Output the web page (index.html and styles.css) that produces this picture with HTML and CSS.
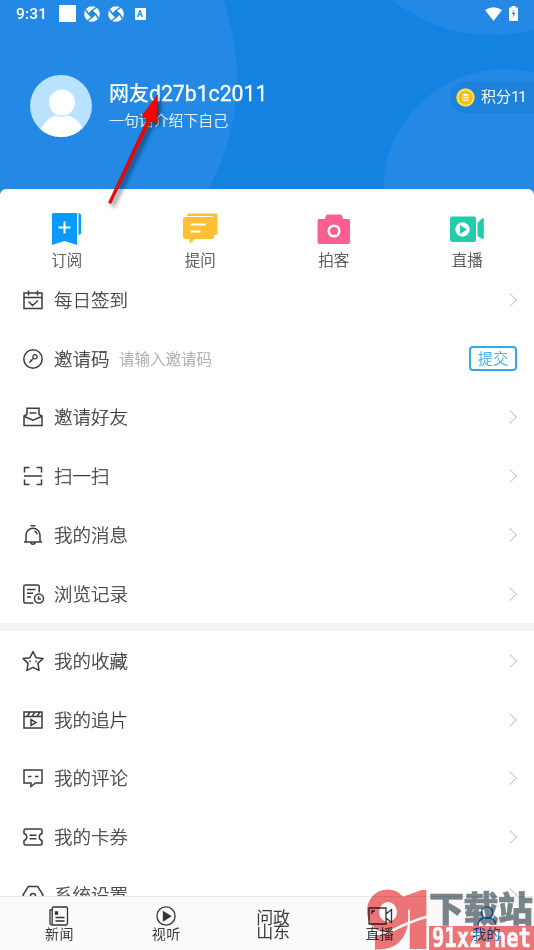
FILE: index.html
```html
<!DOCTYPE html>
<html lang="zh-CN">
<head>
<meta charset="utf-8">
<title>我的</title>
<link rel="stylesheet" href="styles.css">
</head>
<body>
<div class="app">
  <header class="hero">
    <svg class="hero-bg" viewBox="0 0 534 200" aria-hidden="true"><g fill="#2389e4"><circle cx="7" cy="78" r="230"/><circle cx="492" cy="-125" r="160"/><circle cx="505" cy="191" r="122"/></g></svg>
    <div class="status">
      <span class="time">9:31</span>
      <i class="square"></i>
      <svg class="swirl" viewBox="0 0 16 16"><circle cx="8" cy="8" r="7.8" fill="#fff"/><path d="M8 3.600 12.400 8 8 12.400 3.600 8Z" fill="#2389e4"/><path d="M4.500 8 1.500 3.500M8 4.500l4.500-3M11.500 8l3 4.500M8 11.500l-4.500 3" stroke="#2389e4" stroke-width="1.500"/></svg>
      <svg class="swirl" viewBox="0 0 16 16"><circle cx="8" cy="8" r="7.8" fill="#fff"/><path d="M8 3.600 12.400 8 8 12.400 3.600 8Z" fill="#2389e4"/><path d="M4.500 8 1.500 3.500M8 4.500l4.500-3M11.500 8l3 4.500M8 11.500l-4.500 3" stroke="#2389e4" stroke-width="1.500"/></svg>
      <b class="badge-a">A</b>
      <svg class="wifi" viewBox="0 0 17 14"><path d="M0 3Q8.500-2.500 17 3L8.500 14Z" fill="#fff"/></svg>
      <svg class="battery" viewBox="0 0 9 15"><path d="M2.500 0h4v1.500H9V15H0V1.500h2.500Z" fill="#fff"/><path d="M5.500 3.500 2.500 8h2L3.500 12l3-5h-2Z" fill="#2389e4"/></svg>
    </div>
    <div class="profile">
      <svg class="avatar" viewBox="0 0 62 62"><defs><clipPath id="av"><circle cx="31" cy="31" r="31"/></clipPath></defs><g clip-path="url(#av)"><path d="M0 0h62v62H0z" fill="#b9e2ff"/><circle cx="32" cy="27.500" r="13" fill="#fff"/><path d="M9 56C16 45 21 41 27 40.500Q32 43 37 40.500C45 42 50 47 54 56L48 64H14Z" fill="#fff"/></g></svg>
      <div class="who">
        <div class="name">网友<span>d27b1c2011</span></div>
        <div class="bio">一句话介绍下自己</div>
      </div>
      <div class="points">
        <svg viewBox="0 0 19 19"><circle cx="9.500" cy="9.500" r="9.200" fill="#fbe243"/><circle cx="9.500" cy="9.500" r="7" fill="#fdb91f"/><g fill="#fff4cf"><ellipse cx="9.500" cy="7" rx="3.200" ry="1.300"/><path d="M6.300 8.200q3.200 1.800 6.400 0v1.600q-3.200 1.800-6.400 0ZM6.300 10.800q3.200 1.800 6.400 0v1.600q-3.200 1.800-6.400 0Z"/></g></svg>
        <span>积分<em>11</em></span>
      </div>
    </div>
  </header>

  <main class="sheet">
    <nav class="quick">
      <a><svg viewBox="0 0 36 36"><path d="M3 3.500q0-1.500 1.500-1.500H28v32l-12.500-4L3 34Z" fill="#089bff"/><path d="M29.500 2q2.500.5 2.500 2v18q0 2-2.500 2Z" fill="#089bff"/><path d="M9.500 16.500h12M15.500 10.500v12" stroke="#fff" stroke-width="2"/></svg>订阅</a>
      <a><svg viewBox="0 0 36 36"><path d="M5 5q0-2.500 2-2.500h27q1.500 0 1.500 2v17.500q0 2-2 2h-2V7q0-2-2-2Z" fill="#ffc038"/><path d="M1 8Q1 6 3 6h27q2 0 2 2v18q0 2-2 2H13L7.500 33v-5H3q-2 0-2-2Z" fill="#ffc038"/><path d="M8.500 13.500h15M8.500 20.500h10" stroke="#fff" stroke-width="2"/></svg>提问</a>
      <a><svg viewBox="0 0 36 36"><path d="M9 8q.5-4.500 3-4.500h12q2.500 0 3 4.500Z" fill="#ff5f8f"/><rect x="1.500" y="8" width="32.500" height="25" rx="2" fill="#ff5f8f"/><circle cx="18" cy="20" r="5.300" fill="none" stroke="#fff" stroke-width="2.500"/></svg>拍客</a>
      <a><svg viewBox="0 0 36 36"><rect x="1" y="5.500" width="26" height="25.500" rx="2" fill="#22ccab"/><path d="M28.500 12 33 7.500q1.800-1 1.800.8V27q0 1.800-1.800.8L28.500 25Z" fill="#22ccab"/><circle cx="13.500" cy="18.500" r="7.200" fill="#fff"/><path d="m11 14 7 4.500-7 4.500Z" fill="#22ccab"/></svg>直播</a>
    </nav>

    <ul class="menu">
      <li><svg viewBox="0 0 20 20"><path d="M1 3h18v15.500H1ZM1 7.500h18M5.500.5v5M14.500.5v5M5.500 11.500l4 4 5.500-5"/></svg><span>每日签到</span><i class="chev"></i></li>
      <li><svg viewBox="0 0 20 20"><circle cx="10" cy="10" r="9.200"/><g stroke-width="1.200"><circle cx="12" cy="7.700" r="2.100"/><path d="m10.500 9.200-4.500 4.700M7.300 10.700l2 1.600"/></g></svg><span>邀请码</span><small>请输入邀请码</small><button>提交</button></li>
      <li><svg viewBox="0 0 20 20"><path d="M4 8V1.200h12V8M4 7.500 1 9v9.500h18V9l-3-1.500M1.500 9.500 10 13.200l8.500-3.700M6.500 6h7"/></svg><span>邀请好友</span><i class="chev"></i></li>
      <li><svg viewBox="0 0 20 20"><path d="M1.500 6.500V1.500h5M13.500 1.500h5v5M1.500 13.500v5h5M13.500 18.500h5v-5M1 10h18"/></svg><span>扫一扫</span><i class="chev"></i></li>
      <li><svg viewBox="0 0 20 20"><path d="M7.500.8h5M1 17h18M3 17v-7a7 6.800 0 0 1 14 0v7M7.800 17q0 2.200 2.200 2.200t2.200-2.200M11.500 6q2.200.8 2.700 3.200"/></svg><span>我的消息</span><i class="chev"></i></li>
      <li><svg viewBox="0 0 20 20"><path d="M10.500 19H2.500Q.8 19 .8 17.500V2.500Q.8 1 2.500 1h12Q16.200 1 16.200 2.500V8.500M4 5.500h8.500M4 9.200h6M4 13h4"/><circle cx="16" cy="14.500" r="4.500"/><path d="M15.500 12v3h2.500"/></svg><span>浏览记录</span><i class="chev"></i></li>
    </ul>
    <ul class="menu second">
      <li><svg viewBox="0 0 20 20"><path d="m10 .5 3 6.200 6.900.9-5 4.800 1.200 7L10 16.300l-6.100 3.100 1.200-7-5-4.800L7 6.700ZM7 9.500v1.800M13 9.500v1.800" stroke-linejoin="round"/></svg><span>我的收藏</span><i class="chev"></i></li>
      <li><svg viewBox="0 0 20 20"><path d="M1 2h18v16H1ZM1 6.500h18M4 6.500 7 2M9 6.500 12 2M14 6.500 17 2M8 9.500v6l5-3Z"/></svg><span>我的追片</span><i class="chev"></i></li>
      <li><svg viewBox="0 0 20 20"><path d="M1 2h18v13h-6.500L8 18.500V15H1ZM5 8.500h3.500M12 8.500h3.500"/></svg><span>我的评论</span><i class="chev"></i></li>
      <li><svg viewBox="0 0 20 20"><path d="M2.500 2h15q1.500 0 1.500 1.500v3a3.600 3.600 0 0 0 0 7v3q0 1.500-1.500 1.500h-15Q1 18 1 16.500v-3a3.600 3.600 0 0 0 0-7v-3Q1 2 2.500 2ZM6.500 8.200h7M6.500 11.800h7"/></svg><span>我的卡券</span><i class="chev"></i></li>
      <li class="last"><svg viewBox="0 0 20 20"><path d="M5.300 1.500h9.400L20 10l-5.300 8.500H5.300L0 10Z"/><circle cx="10" cy="11" r="2.600"/></svg><span>系统设置</span><i class="chev"></i></li>
    </ul>
  </main>

  <footer class="tabs">
    <a><svg viewBox="0 0 20 20"><path d="M4.500 1H17q1.500 0 1.500 1.500v15q0 1.500-1.500 1.500H3.500Q1 19 1 17V4h2M3.200 18V2.500Q3.200 1 4.500 1M6.500 11.500h9M6.500 15h9"/><path d="M6.500 6h2v2h-2z" fill="#333"/></svg>新闻</a>
    <a><svg viewBox="0 0 20 20"><circle cx="10" cy="10" r="9.100"/><path d="M7.500 6v8.500l7-4.300Z" fill="#333"/></svg>视听</a>
    <a class="center">问政<br>山东</a>
    <a class="live"><svg viewBox="0 0 26 20"><path d="M2 2h17v16H2ZM19 8l5.500-4.500v13L19 12M5 8V5h3"/></svg>直播</a>
    <a class="active"><svg viewBox="0 0 20 20"><circle cx="10" cy="6.500" r="5.700"/><path d="M1 19q1-7.500 9-7.500t9 7.500"/></svg>我的</a>
  </footer>

  <svg class="arrow" viewBox="0 0 80 130" aria-hidden="true"><g fill="#f00" stroke="#a80d0d" stroke-width=".6"><path d="M57.500 15 42 36 47.300 39.500 8.500 122.500 10.800 123.800 50.500 41 56.500 43Z"/></g></svg>

  <svg class="mark" viewBox="0 0 174 66">
    <g class="mark-num"><text x="7" y="60" textLength="42" lengthAdjust="spacingAndGlyphs">9</text><text x="34" y="60" textLength="43" lengthAdjust="spacingAndGlyphs">1</text></g>
    <ellipse cx="28" cy="26" rx="9" ry="10" fill="#fff"/>
    <path d="M28 47Q45 37 69 30" stroke="#fff" stroke-width="2.500" fill="none"/>
    <path d="M69 40h105v24H69z" fill="#f07678"/>
    <text class="mark-cn" x="69" y="35.500" textLength="104">下载站</text>
    <text class="mark-url" x="72" y="60.500" textLength="99" lengthAdjust="spacingAndGlyphs">91xz.net</text>
  </svg>
</div>
</body>
</html>
```
FILE: styles.css
```css
* { box-sizing: border-box; }
body { margin: 0; font-family: "Noto Sans CJK SC", sans-serif; color: #444; background: #fff; }
.app { position: relative; width: 534px; height: 950px; overflow: hidden; display: flex; flex-direction: column; }
svg { display: block; }

.hero { position: relative; height: 200px; flex: none; background: #1482e0; color: #fff; }
.hero-bg { position: absolute; inset: 0; width: 534px; height: 200px; }
.status { position: relative; height: 27px; padding: 0 16px; display: flex; align-items: center; }
.time { font: 500 15.5px/27px Roboto, sans-serif; width: 42.500px; letter-spacing: .2px; padding-top: 1px; }
.square { width: 17px; height: 17px; background: #fff; }
.swirl { width: 16px; height: 16px; margin-left: 8px; }
.badge-a { width: 11px; height: 12px; margin-left: 11px; border-radius: 1px; background: #fff; color: #2389e4; font: 700 9px/12px Roboto, sans-serif; text-align: center; }
.wifi { width: 17px; height: 14px; margin-left: auto; }
.battery { width: 9px; height: 15px; margin: 0 0 0 7.500px; }
.profile { position: relative; display: flex; padding: 48px 0 0 30px; }
.avatar { width: 62px; height: 62px; }
.who { margin: 3px 0 0 17px; }
.name { font-size: 20px; line-height: 30px; font-weight: 500; white-space: nowrap; }
.name span { font-family: Roboto, sans-serif; font-size: 21.2px; font-weight: 400; -webkit-text-stroke: .3px; }
.bio { font-size: 14.900px; line-height: 22px; font-weight: 300; -webkit-text-stroke: .2px; }
.points { margin: 6px 0 0 auto; width: 84px; height: 32px; border-radius: 16px 0 0 16px; background: #1e82da; display: flex; align-items: center; padding-left: 6px; gap: 6px; font-size: 15px; line-height: 22px; white-space: nowrap; }
.points svg { width: 19px; height: 19px; }
.points span { margin-top: -2px; }
.points em { font: 400 15.5px Roboto, sans-serif; letter-spacing: -1.500px; }

.sheet { position: relative; margin-top: -11px; flex: 1; min-height: 0; overflow: hidden; background: #fff; border-radius: 6px 6px 0 0; }
.quick { display: grid; grid-template-columns: repeat(4, 1fr); height: 81.500px; padding-top: 21.500px; }
.quick a { display: flex; flex-direction: column; align-items: center; font-size: 15.500px; line-height: 22px; color: #444; font-weight: 300; -webkit-text-stroke: .2px; }
.quick svg { width: 36px; height: 36px; margin-bottom: 1px; }
.menu { list-style: none; margin: 0; padding: 0; }
.menu li { display: flex; align-items: center; height: 58.750px; padding: 0 17px 0 23px; font-size: 18.500px; font-weight: 300; color: #383838; -webkit-text-stroke: .25px; }
.menu span, .menu small { line-height: 28px; margin-top: -2px; }
.menu svg { width: 20px; height: 20px; margin-right: 11px; fill: none; stroke: #3d3d3d; stroke-width: 1.500; overflow: visible; }
.menu small { font-size: 15.500px; color: #aaa; margin-left: 9.500px; }
.menu button { margin-left: auto; width: 48px; height: 25px; border: 2px solid #35a8e8; border-radius: 4px; background: #fff; color: #35a8e8; font: 300 15px/19px "Noto Sans CJK SC", sans-serif; padding: 0 0 2px; -webkit-text-stroke: .2px; }
.chev { width: 10px; height: 10px; margin: 0 2px 0 auto; border: solid #c9c9c9; border-width: 1.500px 1.500px 0 0; transform: rotate(45deg); }
.second { border-top: 8.500px solid #f4f4f4; }
.second li { padding-top: 1px; }
.menu .last { margin-top: -1px; }

.tabs { height: 54px; flex: none; position: relative; display: grid; grid-template-columns: repeat(5, 106.8px); background: #fafafa; border-top: 1px solid #e8e8e8; padding: 8.500px 0 0 6px; }
.tabs a { display: flex; flex-direction: column; align-items: center; font-size: 14px; line-height: 15px; letter-spacing: .4px; color: #3d3d3d; }
.tabs svg { width: 20px; height: 20px; fill: none; stroke: #333; stroke-width: 1.300; }
.tabs .live svg { width: 26px; }
.tabs .center { display: block; text-align: center; font-size: 17px; line-height: 14px; letter-spacing: -.3px; padding-top: 4px; }
.tabs .active { color: #1482e0; }
.tabs .active svg { stroke: #1482e0; }

.arrow { position: absolute; left: 100px; top: 80px; width: 80px; height: 130px; filter: drop-shadow(3px 3px 2px rgba(0,0,0,.5)); }
.mark { position: absolute; left: 360px; top: 886px; width: 174px; height: 66px; mix-blend-mode: multiply; }
.mark-num { font: 700 74px Roboto, sans-serif; fill: #f07678; stroke: #f07678; stroke-width: 6; }
.mark-cn { font: 900 35px "Noto Sans CJK SC", sans-serif; fill: #7a868d; stroke: #7a868d; stroke-width: .6; }
.mark-url { font: 700 26px "DejaVu Sans Mono", monospace; fill: #fff; stroke: #fff; stroke-width: .6; }
```
